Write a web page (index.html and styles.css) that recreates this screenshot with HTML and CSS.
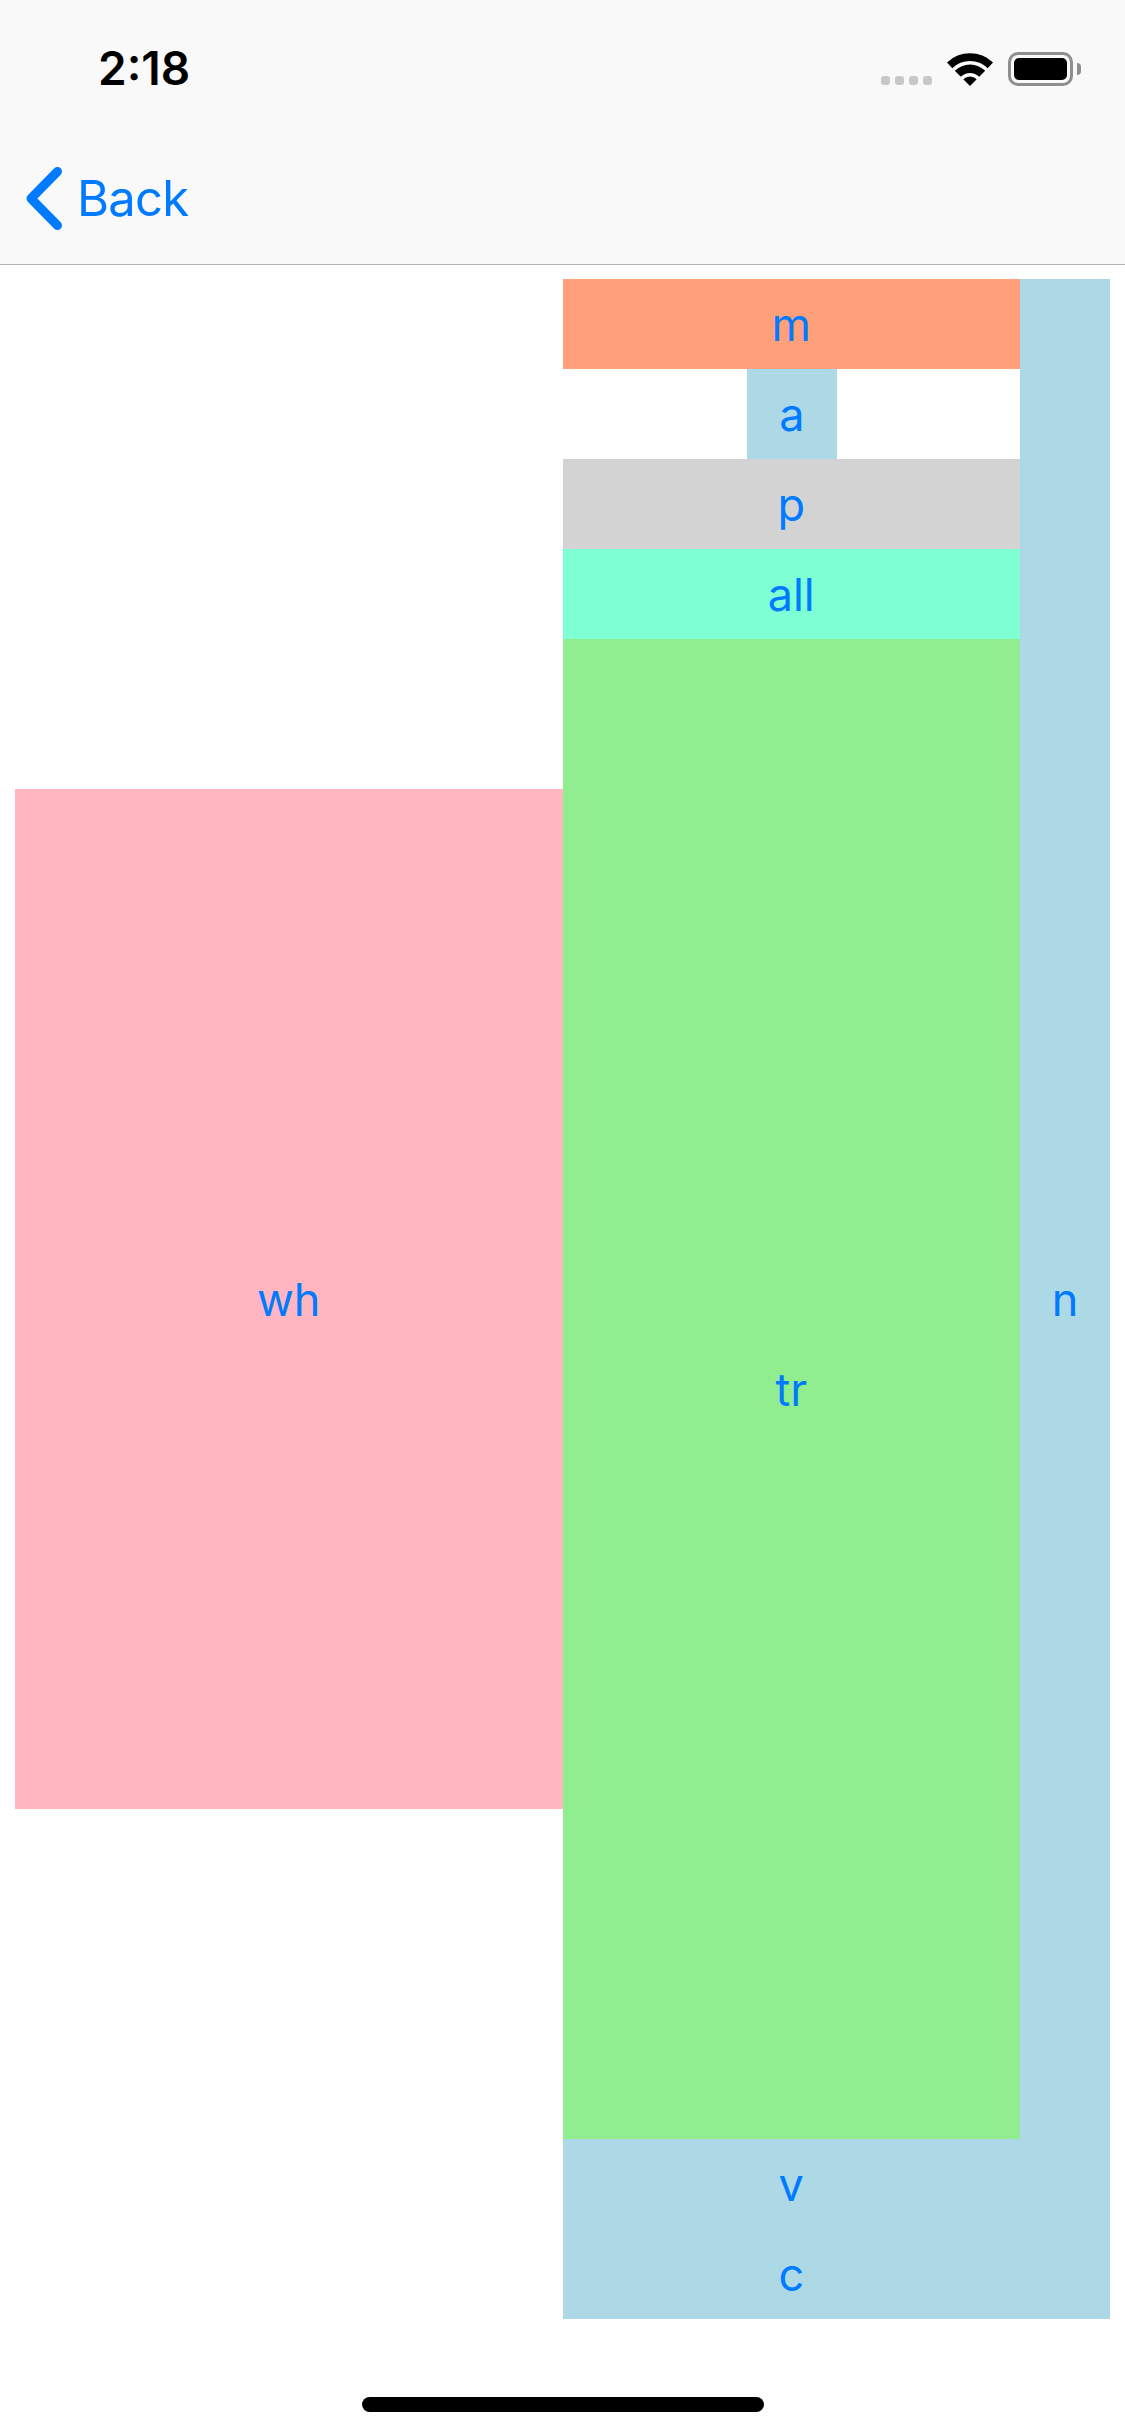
FILE: index.html
```html
<!DOCTYPE html>
<html lang="en">
<head>
  <meta charset="UTF-8" />
  <meta name="viewport" content="width=device-width, initial-scale=1.0"/>
  <title>Layout</title>
  <link rel="stylesheet" href="styles.css">
</head>
<body>

  <header class="header">
    <div class="status-bar">
      <span class="time">2:18</span>
      <div class="status-icons">
        <div class="signal">
          <span class="dot"></span>
          <span class="dot"></span>
          <span class="dot"></span>
          <span class="dot"></span>
        </div>
        <svg class="wifi" width="46" height="33" viewBox="0 0 46 33">
          <path d="M0 9.5A33 33 0 0 1 46 9.5L40.7 15.3A25 25 0 0 0 5.3 15.3Z"/>
          <path d="M7.8 17.8A21.5 21.5 0 0 1 38.2 17.8L32.2 23.8A13 13 0 0 0 13.8 23.8Z"/>
          <path d="M16.3 26.3A9.5 9.5 0 0 1 29.7 26.3L23 33Z"/>
        </svg>
        <div class="battery">
          <div class="battery-level"></div>
        </div>
        <div class="battery-nub"></div>
      </div>
    </div>
    <div class="nav-bar">
      <svg class="chevron" width="38" height="65" viewBox="0 0 38 65">
        <path d="M31.5 5.5L5 32.500L31.500 59.500"/>
      </svg>
      <span class="back-label">Back</span>
    </div>
  </header>

  <main class="layout">
    <div class="half left">
      <div class="box pink">wh</div>
    </div>
    <div class="half right">
      <div class="center-col">
        <div class="box row salmon">m</div>
        <div class="row a-row"><div class="box square">a</div></div>
        <div class="box row gray">p</div>
        <div class="box row aqua">all</div>
        <div class="box green">tr</div>
        <div class="box row">v</div>
        <div class="box row">c</div>
      </div>
      <div class="box side">n</div>
    </div>
  </main>

  <footer class="home-bar">
    <div class="home-indicator"></div>
  </footer>

</body>
</html>
```

FILE: styles.css
```css
body {
  font-family: Inter, "Liberation Sans", sans-serif;
  background-color: #fff;
  margin: 0;
  padding: 0;
  display: flex;
  flex-direction: column;
  min-height: 2436px;
}

/* Status bar and nav */
.header {
  background-color: #f9f9f9;
  border-bottom: 1px solid #b2b2b2;
}

.status-bar {
  height: 132px;
  display: flex;
  align-items: center;
  justify-content: space-between;
  padding: 0 44px 0 98px;
  box-sizing: border-box;
}

.time {
  font-size: 46px;
  font-weight: 600;
  color: #000;
  position: relative;
  top: 2px;
}

.status-icons {
  display: flex;
  align-items: center;
  position: relative;
  top: 3px;
}

.signal {
  display: flex;
  gap: 5px;
  margin-right: 15px;
  position: relative;
  top: 11px;
}

.dot {
  width: 9px;
  height: 9px;
  border-radius: 3px;
  background-color: #c8c8c8;
}

.wifi {
  fill: #000;
  margin-right: 15px;
}

.battery {
  width: 65px;
  height: 34px;
  box-sizing: border-box;
  border: 3px solid #8e8e8e;
  border-radius: 10px;
  padding: 3px;
}

.battery-level {
  height: 100%;
  background-color: #000;
  border-radius: 5px;
}

.battery-nub {
  width: 4px;
  height: 12px;
  margin-left: 4px;
  background-color: #8e8e8e;
  border-radius: 0 4px 4px 0;
}

.nav-bar {
  height: 132px;
  padding-left: 26px;
  display: flex;
  align-items: center;
}

.chevron {
  fill: none;
  stroke: #007aff;
  stroke-width: 9;
  stroke-linecap: round;
  stroke-linejoin: round;
  margin-right: 13px;
}

.back-label {
  font-size: 49px;
  letter-spacing: -0.8px;
  color: #007aff;
}

/* Boxes */
.layout {
  flex: 1;
  display: flex;
  padding: 14px 15px 15px;
  align-items: flex-start;
}

.half {
  width: 547.5px;
}

.left {
  height: 2040px;
  display: flex;
  align-items: center;
}

.right {
  height: 2040px;
  display: flex;
  background-color: #add8e6;
}

.center-col {
  flex: 1;
  display: flex;
  flex-direction: column;
}

.box {
  display: flex;
  align-items: center;
  justify-content: center;
  font-size: 45px;
  color: #007aff;
}

.row {
  height: 90px;
}

.a-row {
  display: flex;
  justify-content: center;
  background-color: #fff;
}

.square {
  width: 90px;
  margin-left: 1.5px;
  background-color: #add8e6;
}

.pink {
  width: 100%;
  height: 1020px;
  background-color: #ffb6c1;
}

.salmon {
  background-color: #ffa07a;
}

.gray {
  background-color: #d3d3d3;
}

.aqua {
  background-color: #7fffd4;
}

.green {
  height: 1500px;
  background-color: #90ee90;
}

.side {
  width: 90px;
}

/* Home indicator */
.home-bar {
  display: flex;
  justify-content: center;
  padding-bottom: 24px;
}

.home-indicator {
  width: 402px;
  height: 15px;
  background-color: #000;
  border-radius: 8px;
}
```
